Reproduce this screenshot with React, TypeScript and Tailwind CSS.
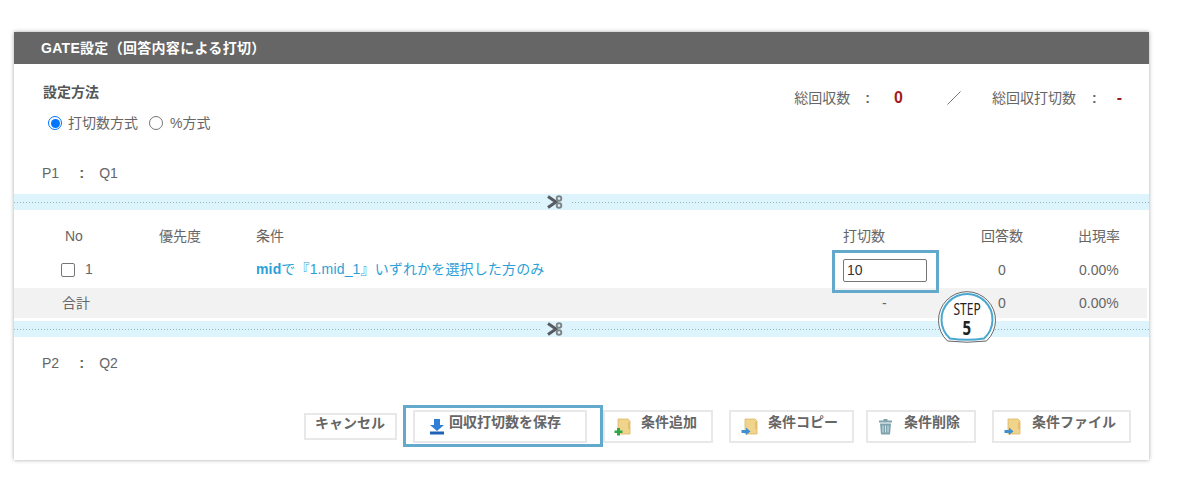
const FONT = 'font-["Liberation_Sans","Noto_Sans_CJK_JP",sans-serif]';

function ScissorsMark() {
  return (
    <svg width="16" height="14" viewBox="0 0 16 14" fill="none" className="shrink-0">
      <path d="M1 1.5 L9 7 L1 12.5" stroke="#555b5e" strokeWidth="3" />
      <circle cx="12" cy="3.5" r="2.3" stroke="#7d8487" strokeWidth="1.9" />
      <circle cx="12" cy="10.5" r="2.3" stroke="#7d8487" strokeWidth="1.9" />
    </svg>
  );
}

function CutDivider() {
  return (
    <div className="flex h-4 items-center bg-[#def4fd]">
      <div className="h-px w-[526px] bg-[linear-gradient(to_right,#8fb4c1_1px,transparent_1px)] bg-[length:3px_1px]" />
      <div className="ml-[7px] mr-[9px]">
        <ScissorsMark />
      </div>
      <div className="h-px flex-1 bg-[linear-gradient(to_right,#8fb4c1_1px,transparent_1px)] bg-[length:3px_1px]" />
    </div>
  );
}

function FolderIcon({ badge }: { badge: 'add' | 'arrow' }) {
  return (
    <svg width="17" height="18" viewBox="0 0 17 18" className="shrink-0">
      <path d="M4 1 H14 L16 3 V16 H4 Z" fill="#f0d48c" stroke="#d9b765" strokeWidth="0.8" />
      <path d="M14 4 H16 V11 H14 Z" fill="#e3bf6c" />
      {badge === 'add' ? (
        <path d="M3 10 H6 V12.5 H8.5 V15 H6 V17.5 H3 V15 H0.5 V12.5 H3 Z" fill="#2fa84a" />
      ) : (
        <path d="M0.5 12 H5 V9.5 L9.5 13.5 L5 17 V15 H0.5 Z" fill="#3f8fd2" />
      )}
    </svg>
  );
}

function SaveIcon() {
  return (
    <svg width="16" height="17" viewBox="0 0 16 17" className="shrink-0">
      <path d="M5 1 H11 V7 H15 L8 13 L1 7 H5 Z" fill="#2f7fd6" />
      <rect x="1" y="13.5" width="14" height="3" fill="#1f63b8" />
    </svg>
  );
}

function TrashIcon() {
  return (
    <svg width="15" height="17" viewBox="0 0 15 17" className="shrink-0">
      <path d="M5.5 1 H9.5 V2.5 H14 V4.5 H1 V2.5 H5.5 Z" fill="#7fa3ad" />
      <path d="M2 5.5 H13 L12 16.5 H3 Z" fill="#7fa3ad" />
      <path d="M5 7.5 V14.5 M7.5 7.5 V14.5 M10 7.5 V14.5" stroke="#d5e2e6" strokeWidth="1" />
    </svg>
  );
}

function ActionButton({ className, icon, label, gap }: { className: string; icon?: React.ReactNode; label: string; gap: string }) {
  return (
    <button className={`flex items-start justify-start border-2 border-[#e8e8e8] bg-white text-[14px] font-bold leading-[20px] text-[#666] ${className}`}>
      {icon && <span className="mt-[6px]">{icon}</span>}
      <span className={gap}>{label}</span>
    </button>
  );
}

function PageLabel({ page, question, className }: { page: string; question: string; className: string }) {
  return (
    <div className={`flex items-center pl-[28px] ${className}`}>
      <span>{page}</span>
      <span className="ml-[20px] text-[15px] font-bold">:</span>
      <span className="ml-[15px]">{question}</span>
    </div>
  );
}

export default function App() {
  return (
    <div className={`h-[486px] w-[1183px] overflow-hidden bg-white pl-[14px] pt-[32px] text-[14px] text-[#666] ${FONT}`}>
      <div className="relative h-[428px] w-[1135px] bg-white shadow-[0_0_4px_rgba(0,0,0,0.35)]">
        <div className="h-8 bg-[#666] pl-[27px] text-[14px] font-bold leading-[33px] tracking-[0.3px] text-white">
          GATE設定（回答内容による打切）
        </div>

        <div className="flex h-[98px] justify-between pl-[29px]">
          <div>
            <div className="pt-[18px] text-[14px] font-bold leading-5 text-[#555]">設定方法</div>
            <div className="mt-[11px] flex items-center pl-[5px] leading-5">
              <span className="flex h-[14px] w-[14px] items-center justify-center rounded-full border border-[#0075ff]">
                <span className="h-[9px] w-[9px] rounded-full bg-[#0075ff]" />
              </span>
              <span className="ml-[6px]">打切数方式</span>
              <span className="ml-[11px] h-[14px] w-[14px] rounded-full border border-[#767676]" />
              <span className="ml-[7px]">%方式</span>
            </div>
          </div>
          <div className="flex h-fit items-center pr-[27px] pt-[24px] leading-5">
            <span>総回収数</span>
            <span className="ml-[15px] font-bold">:</span>
            <span className="ml-[24px] w-[10px] text-[16px] font-bold text-[#a31c1c]">0</span>
            <svg width="14" height="14" viewBox="0 0 14 14" className="ml-[43px]">
              <path d="M0.5 13.5 L13.5 0.5" stroke="#777" strokeWidth="1" />
            </svg>
            <span className="ml-[31px]">総回収打切数</span>
            <span className="ml-[16px] font-bold">:</span>
            <span className="ml-[20px] text-[16px] font-bold text-[#a31c1c]">-</span>
          </div>
        </div>

        <PageLabel page="P1" question="Q1" className="h-[32px] pb-[10px]" />
        <CutDivider />

        <div className="flex h-[42px] items-center pt-[10px]">
          <span className="w-[145px] pl-[51px]">No</span>
          <span className="w-[97px]">優先度</span>
          <span className="w-[587px]">条件</span>
          <span className="w-[138px]">打切数</span>
          <span className="w-[97px]">回答数</span>
          <span>出現率</span>
        </div>

        <div className="flex h-[36px] items-center">
          <div className="flex w-[145px] items-center pl-[47px]">
            <span className="h-[14px] w-[14px] rounded-[2px] border border-[#767676]" />
            <span className="ml-[10px] pb-[2px]">1</span>
          </div>
          <span className="w-[97px]" />
          <span className="w-[587px] pb-[2px] tracking-[0.15px] text-[#2a9fd8]">
            <b>mid</b>で『1.mid_1』いずれかを選択した方のみ
          </span>
          <div className="relative w-[138px]">
            <input
              readOnly
              value="10"
              className="block h-[23px] w-[84px] rounded-[2px] border border-[#767676] bg-white px-[3px] text-[14px] text-[#333] outline-none"
            />
            <div className="absolute left-[-11px] top-[-9px] h-[43px] w-[107px] border-[3px] border-[#63a9cc]" />
          </div>
          <span className="w-[98px] pl-[17px]">0</span>
          <span>0.00%</span>
        </div>

        <div className="mr-[2px] flex h-[30px] items-center bg-[#f2f2f2]">
          <span className="w-[242px] pl-[48px]">合計</span>
          <span className="w-[587px]" />
          <span className="w-[138px] pl-[39px]">-</span>
          <span className="w-[98px] pl-[17px]">0</span>
          <span>0.00%</span>
        </div>

        <div className="mt-[3px]">
          <CutDivider />
        </div>

        <PageLabel page="P2" question="Q2" className="h-[52px]" />

        <div className="mt-[21px] flex items-start pl-[290px]">
          <ActionButton className="mt-[3px] h-[27px] w-[93px] pl-[9px]" label="キャンセル" gap="mt-[-2px]" />
          <div className="relative ml-[16px]">
            <ActionButton className="h-[33px] w-[174px] pl-[14px]" icon={<SaveIcon />} label="回収打切数を保存" gap="ml-[4px]" />
            <div className="absolute left-[-10px] top-[-5px] h-[42px] w-[200px] border-[3px] border-[#63a9cc]" />
          </div>
          <ActionButton className="ml-[16px] h-[33px] w-[110px] pl-[9px]" icon={<FolderIcon badge="add" />} label="条件追加" gap="ml-[10px]" />
          <ActionButton className="ml-[16px] h-[33px] w-[125px] pl-[10px]" icon={<FolderIcon badge="arrow" />} label="条件コピー" gap="ml-[10px]" />
          <ActionButton className="ml-[12px] h-[33px] w-[110px] pl-[10px]" icon={<TrashIcon />} label="条件削除" gap="ml-[11px]" />
          <ActionButton className="ml-[16px] h-[33px] w-[139px] pl-[10px]" icon={<FolderIcon badge="arrow" />} label="条件ファイル" gap="ml-[11px]" />
        </div>

        <div className="absolute left-[924px] top-[259px] h-[53px] w-[58px]">
          <svg width="58" height="53" viewBox="0 0 58 53" fill="white" strokeLinejoin="round" className="absolute inset-0">
            <path d="M9.5 50 A28.5 28.5 0 1 1 48.5 50 Q29 52.5 9.5 50 Z" stroke="#666" strokeWidth="1" />
            <path d="M12 47.5 A25.5 25.5 0 1 1 46 47.5 Q29 50 12 47.5 Z" stroke="#4aa8d0" strokeWidth="2" />
          </svg>
          <div className='relative flex h-full flex-col items-center pt-[10px] font-["Noto_Sans",sans-serif] text-[#222]'>
            <span className="inline-block scale-x-75 text-[16px] leading-[17px]">STEP</span>
            <span className="inline-block scale-x-75 text-[20px] font-bold leading-[20px]">5</span>
          </div>
        </div>
      </div>
    </div>
  );
}
